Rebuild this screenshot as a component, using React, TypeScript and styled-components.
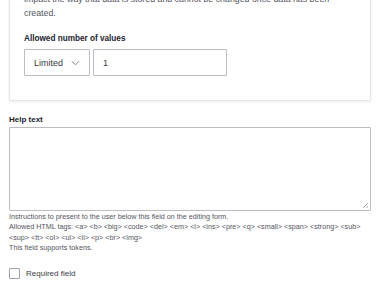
import * as React from "react";
import styled, { createGlobalStyle } from "styled-components";

const GlobalStyle = createGlobalStyle`
  html, body {
    margin: 0;
    padding: 0;
    background: #ffffff;
    font-family: "Liberation Sans", Arial, sans-serif;
    color: #222330;
    overflow: hidden;
  }
`;

function App(): JSX.Element {
  return (
    <>
      <GlobalStyle />
      <Page>
        <Card>
          <CardText>
            impact the way that data is stored and cannot be changed once data has been created.
          </CardText>
          <FieldLabel>Allowed number of values</FieldLabel>
          <InputRow>
            <Select>
              <span>Limited</span>
              <Chevron viewBox="0 0 10 6" width="9" height="6">
                <path d="M1 1l4 4 4-4" fill="none" stroke="#6b6c75" strokeWidth="0.9" />
              </Chevron>
            </Select>
            <NumberInput>1</NumberInput>
          </InputRow>
        </Card>
        <Section>
          <SectionLabel>Help text</SectionLabel>
          <TextArea>
            <Grip viewBox="0 0 8 8" width="8" height="8">
              <path d="M7 2L2 7M7 5L5 7" stroke="#9a9aa0" strokeWidth="0.8" />
            </Grip>
          </TextArea>
          <Description>
            <div>Instructions to present to the user below this field on the editing form.</div>
            <div>
              Allowed HTML tags: &lt;a&gt; &lt;b&gt; &lt;big&gt; &lt;code&gt; &lt;del&gt; &lt;em&gt; &lt;i&gt;
              &lt;ins&gt; &lt;pre&gt; &lt;q&gt; &lt;small&gt; &lt;span&gt; &lt;strong&gt; &lt;sub&gt;
              &lt;sup&gt; &lt;tt&gt; &lt;ol&gt; &lt;ul&gt; &lt;li&gt; &lt;p&gt; &lt;br&gt; &lt;img&gt;
            </div>
            <div>This field supports tokens.</div>
          </Description>
          <CheckRow>
            <CheckBox />
            <CheckLabel>Required field</CheckLabel>
          </CheckRow>
        </Section>
      </Page>
    </>
  );
}

const Page = styled.div`
  display: flex;
  flex-direction: column;
  margin-top: -8px;
  padding: 0 9px;
`;

const Card = styled.div`
  display: flex;
  flex-direction: column;
  border: 1px solid #e6e6ea;
  border-top: none;
  border-radius: 0 0 2px 2px;
  box-shadow: 0 1px 3px rgba(0, 0, 0, 0.08);
  padding: 0 14px 24px 14px;
`;

const CardText = styled.p`
  margin: 0;
  font-size: 8.8px;
  line-height: 14px;
  color: #545560;
`;

const FieldLabel = styled.div`
  margin-top: 14px;
  font-size: 8.2px;
  line-height: 10px;
  font-weight: bold;
  color: #222330;
`;

const InputRow = styled.div`
  display: flex;
  gap: 3px;
  margin-top: 5px;
`;

const Select = styled.div`
  box-sizing: border-box;
  width: 66px;
  height: 27px;
  border: 1px solid #bcbcc2;
  border-radius: 1px;
  display: flex;
  align-items: center;
  justify-content: space-between;
  padding: 0 9px 0 9px;
  font-size: 9px;
  color: #3a3a44;
`;

const Chevron = styled.svg`
  display: block;
`;

const NumberInput = styled.div`
  box-sizing: border-box;
  width: 134px;
  height: 27px;
  border: 1px solid #bcbcc2;
  border-radius: 1px;
  display: flex;
  align-items: center;
  padding: 0 9px;
  font-size: 9px;
  color: #3a3a44;
`;

const Section = styled.div`
  display: flex;
  flex-direction: column;
  margin-top: 14px;
`;

const SectionLabel = styled.div`
  font-size: 8px;
  line-height: 10px;
  font-weight: bold;
  color: #222330;
`;

const TextArea = styled.div`
  position: relative;
  box-sizing: border-box;
  margin-top: 2px;
  height: 84px;
  border: 1px solid #bcbcc2;
  border-radius: 1px;
`;

const Grip = styled.svg`
  position: absolute;
  right: 1px;
  bottom: 1px;
`;

const Description = styled.div`
  margin-top: 1px;
  font-size: 7.2px;
  line-height: 10.3px;
  color: #545560;
`;

const CheckRow = styled.div`
  display: flex;
  align-items: center;
  gap: 6px;
  margin-top: 15px;
`;

const CheckBox = styled.div`
  box-sizing: border-box;
  width: 11px;
  height: 11px;
  border: 1px solid #a0a0a8;
  border-radius: 1px;
`;

const CheckLabel = styled.span`
  font-size: 8px;
  color: #3a3a44;
`;

export default App;
